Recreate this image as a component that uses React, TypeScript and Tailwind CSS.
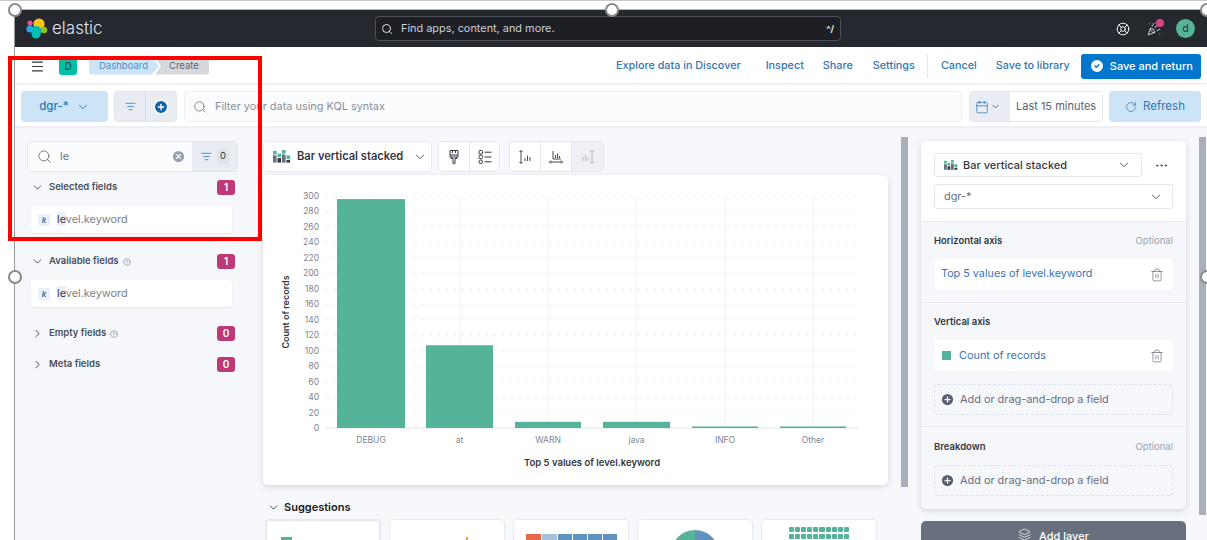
import React from "react";
import {
  Search, XCircle, ListFilter, ChevronDown, ChevronRight, Menu, RotateCw, Calendar, Trash2,
  MoreHorizontal, Layers, LifeBuoy, PartyPopper, CircleCheck, CirclePlus, CircleHelp,
} from "lucide-react";

const FONT = "font-['Inter','Liberation_Sans',sans-serif]";

function Handle({ cls }: { cls: string }) {
  return <div className={`absolute w-[14px] h-[14px] rounded-full bg-white border-[2.5px] border-[#8a8a8a] ${cls}`} />;
}

function BarIcon({ size = 18 }: { size?: number }) {
  const cols = [
    [8, 4, "#54b399", "#69707d"],
    [4, 7, "#54b399", "#343741"],
    [9, 3, "#54b399", "#69707d"],
    [3, 9, "#54b399", "#343741"],
  ] as const;
  return (
    <svg width={size} height={size * 0.7} viewBox="0 0 20 14" className="shrink-0">
      {cols.map((c, i) => (
        <g key={i}>
          <rect x={i * 5} y={0 + c[1] - 3} width={4} height={4} fill={c[2]} />
          <rect x={i * 5} y={c[1] + 2} width={4} height={12 - c[1]} fill={c[3]} />
        </g>
      ))}
    </svg>
  );
}

function Logo() {
  return (
    <svg width="22" height="21" viewBox="0 0 22 21" className="shrink-0">
      <circle cx="13" cy="6" r="5.6" fill="#fec514" />
      <circle cx="4" cy="5" r="2.6" fill="#f04e98" />
      <circle cx="4" cy="11" r="3.6" fill="#1ba9f5" />
      <circle cx="18" cy="12" r="3.2" fill="#93c90e" />
      <circle cx="10.5" cy="13" r="5" fill="#00bfb3" />
      <circle cx="10" cy="16" r="4.6" fill="#00bfb3" />
    </svg>
  );
}

function Badge({ n }: { n: number }) {
  return (
    <span className="w-[18px] h-[15px] rounded-[3px] bg-[#bd3a77] text-white text-[10px] font-semibold flex items-center justify-center">
      {n}
    </span>
  );
}

function FieldRow() {
  return (
    <div className="ml-[4px] w-[201px] h-[27px] bg-white rounded-[4px] shadow-[0_1px_2px_rgba(0,0,0,0.06)] flex items-center pl-[7px] gap-[7px]">
      <span className="w-[12px] h-[12px] rounded-[2px] bg-[#e6f1fa] text-[#3a6ea5] text-[8px] italic font-semibold flex items-center justify-center">k</span>
      <span className="text-[10.9px] text-[#7a818d]">
        <span className="bg-[#e6f1fa] text-[#343741]">le</span>vel.keyword
      </span>
    </div>
  );
}

function GroupHeader({ label, open, n, help, cls }: { label: string; open: boolean; n: number; help?: boolean; cls: string }) {
  return (
    <div className={`flex items-center w-[208px] ${cls}`}>
      <div className="w-[17px] ml-[4px] text-[#343741] flex">
        {open ? <ChevronDown size={13} strokeWidth={1.6} /> : <ChevronRight size={13} strokeWidth={1.6} />}
      </div>
      <span className="ml-[1px] text-[9.5px] font-semibold text-[#4a4f5a]">{label}</span>
      {help && <CircleHelp size={8} className="ml-[4px] text-[#8a909b]" />}
      <div className="ml-auto"><Badge n={n} /></div>
    </div>
  );
}

function Sidebar() {
  return (
    <div className="w-[235px] shrink-0 pt-[13px] pl-[12px] bg-[#f5f7fb]">
      <div className="w-[211px] h-[31px] flex rounded-[4px] border border-[#e3e7ef] bg-[#fbfcfd] overflow-hidden">
        <div className="flex-1 flex items-center pl-[9px]">
          <Search size={15} strokeWidth={1.4} className="text-[#69707d]" />
          <span className="ml-[8px] text-[10.9px] text-[#69707d]">le</span>
          <XCircle size={15} className="ml-auto mr-[6px] text-white fill-[#98a2b3]" />
        </div>
        <div className="w-[45px] bg-[#e9edf3] flex items-center pl-[9px] gap-[5px]">
          <ListFilter size={11} className="text-[#3b8ed0]" />
          <span className="text-[9.5px] text-[#343741] bg-[#dfe4ec] px-[3px] rounded-[2px]">0</span>
        </div>
      </div>
      <GroupHeader cls="mt-[8px]" label="Selected fields" open n={1} />
      <div className="mt-[11px]"><FieldRow /></div>
      <GroupHeader cls="mt-[21px]" label="Available fields" open n={1} help />
      <div className="mt-[11px]"><FieldRow /></div>
      <GroupHeader cls="mt-[19px]" label="Empty fields" open={false} n={0} help />
      <GroupHeader cls="mt-[16px]" label="Meta fields" open={false} n={0} />
    </div>
  );
}

function Chart() {
  const ticks = Array.from({ length: 16 }, (_, i) => i * 20);
  const y = (v: number) => 253 - (v / 300) * 232;
  const bars: [string, number, number, number][] = [
    ["DEBUG", 74, 68, 296],
    ["at", 163, 67, 107],
    ["WARN", 252, 66, 8],
    ["java", 340, 67, 8],
    ["INFO", 429, 66, 2],
    ["Other", 517, 66, 2],
  ];
  return (
    <svg width="625" height="310" viewBox="0 0 625 310">
      <g stroke="#eef0f4" strokeWidth="1">
        {ticks.map((t) => (
          <line key={t} x1="62" x2="595" y1={y(t)} y2={y(t)} strokeDasharray="4 4" />
        ))}
        {[108, 197, 285, 373, 462, 550].map((x) => (
          <line key={x} x1={x} x2={x} y1="21" y2="253" />
        ))}
      </g>
      <line x1="62" x2="595" y1="253" y2="253" stroke="#e3e6ec" />
      {ticks.map((t) => (
        <text key={t} x="56" y={y(t) + 3} textAnchor="end" fontSize="8.5" fill="#7d8491" fontFamily="Inter, sans-serif">{t}</text>
      ))}
      {bars.map(([label, x, w, v]) => (
        <g key={label}>
          <rect x={x} y={y(v)} width={w} height={253 - y(v)} fill="#54b399" />
          <text x={x + w / 2} y="268" textAnchor="middle" fontSize="8.5" fill="#7d8491" fontFamily="Inter, sans-serif">{label}</text>
        </g>
      ))}
      <text x="329" y="291" textAnchor="middle" fontSize="9.5" fontWeight="600" fill="#343741" fontFamily="Inter, sans-serif">Top 5 values of level.keyword</text>
      <text transform="translate(26 137) rotate(-90)" textAnchor="middle" fontSize="9" fontWeight="600" fill="#343741" fontFamily="Inter, sans-serif">Count of records</text>
    </svg>
  );
}

function AxisIcon({ v }: { v: 0 | 1 | 2 }) {
  const dim = v === 2 ? "#a9afb9" : "#343741";
  if (v === 1) {
    return (
      <svg width="16" height="16" viewBox="0 0 16 16" fill="none" stroke={dim} strokeWidth="0.9">
        <path d="M5 2v8h8M7.5 9V6M9.5 9V4.5M11.5 9V7" />
        <path d="M1.5 13h13M3 11.5 1.5 13 3 14.5M13 11.5l1.5 1.5-1.5 1.5" />
      </svg>
    );
  }
  return (
    <svg width="16" height="16" viewBox="0 0 16 16" fill="none" stroke={dim} strokeWidth="0.9" className={v === 2 ? "-scale-x-100" : ""}>
      <path d="M4 1.5v13M2.5 3 4 1.5 5.5 3M2.5 13 4 14.5 5.5 13" />
      <path d="M8 12V9M10.5 12V6.5M13 12V8" />
    </svg>
  );
}

function BrushIcon() {
  return (
    <svg width="14" height="16" viewBox="0 0 14 16" fill="none" stroke="#343741" strokeWidth="1">
      <path d="M3 1.5h8v6.5H3zM3 6h8M5.5 1.5V4M8.5 1.5V4" />
      <path d="M4 8v1.5h2V14a1 1 0 0 0 2 0V9.5h2V8" />
    </svg>
  );
}

function LegendIcon() {
  return (
    <svg width="14" height="16" viewBox="0 0 14 16" fill="none" stroke="#343741" strokeWidth="1">
      <rect x="1" y="1.5" width="3.5" height="3.5" rx="1" />
      <rect x="1" y="6.2" width="3.5" height="3.5" rx="1" />
      <circle cx="2.75" cy="12.8" r="1.8" />
      <path d="M6.5 3.2h7M6.5 8h7M6.5 12.8h7" />
    </svg>
  );
}

function ToolBtn({ children, disabled, border, w }: { children: React.ReactNode; disabled?: boolean; border?: boolean; w: string }) {
  return (
    <div className={`${w} flex items-center justify-center ${disabled ? "bg-[#eef0f5]" : "bg-white"} ${border ? "border-r border-[#e3e7ef]" : ""}`}>
      {children}
    </div>
  );
}

function Thumb({ cls, children }: { cls: string; children?: React.ReactNode }) {
  return <div className={`shrink-0 h-[30px] bg-white rounded-t-[4px] border border-[#e6e9f0] overflow-hidden flex justify-center ${cls}`}>{children}</div>;
}

function Workspace() {
  return (
    <div className="w-[658px] shrink-0 flex bg-[#f7f8fc]">
      <div className="w-[638px] pl-[13px] pt-[13px] shrink-0">
        <div className="flex h-[31px]">
          <div className="w-[169px] bg-white rounded-[5px] border border-[#e8ebf1] flex items-center pl-[9px]">
            <BarIcon />
            <span className="ml-[6px] text-[11.1px] font-semibold text-[#343741] whitespace-nowrap">Bar vertical stacked</span>
            <ChevronDown size={14} strokeWidth={1.5} className="ml-[10px] text-[#343741]" />
          </div>
          <div className="ml-[6px] flex rounded-[5px] border border-[#e3e7ef] overflow-hidden">
            <ToolBtn w="w-[31px]" border><BrushIcon /></ToolBtn>
            <ToolBtn w="w-[29px]"><LegendIcon /></ToolBtn>
          </div>
          <div className="ml-[9px] flex rounded-[5px] border border-[#e3e7ef] overflow-hidden">
            <ToolBtn w="w-[31px]" border><AxisIcon v={0} /></ToolBtn>
            <ToolBtn w="w-[31px]" border><AxisIcon v={1} /></ToolBtn>
            <ToolBtn w="w-[31px]" disabled><AxisIcon v={2} /></ToolBtn>
          </div>
        </div>
        <div className="mt-[3px] w-[625px] h-[310px] bg-white rounded-[5px] shadow-[0_2px_6px_rgba(60,70,90,0.18)]">
          <Chart />
        </div>
        <div className="mt-[15px] flex items-center h-[14px] pl-[4px]">
          <ChevronDown size={13} strokeWidth={1.6} className="text-[#343741]" />
          <span className="ml-[4px] text-[11px] font-semibold text-[#1a1c21]">Suggestions</span>
        </div>
        <div className="mt-[5px] flex ml-[2px] w-[640px] gap-[8px]">
          <Thumb cls="w-[116px] bg-[#f1f3f7] border-[#c9cfdb] border-2 justify-start pl-[14px] pt-[16px]">
            <div className="w-[11px] h-[10px] bg-[#54b399]" />
          </Thumb>
          <Thumb cls="w-[116px]">
            <div className="mt-[17px] ml-[40px] w-[2px] h-[12px] bg-[#e7a33e]" />
          </Thumb>
          <Thumb cls="w-[116px] items-start pt-[14px]">
            <div className="flex gap-[1px] h-[14px]">
              <div className="w-[15px] bg-[#e7664c]" />
              <div className="w-[15px] bg-[#a8c0de]" />
              <div className="w-[14px] bg-[#6092c0]" />
              <div className="w-[14px] bg-[#6092c0]" />
              <div className="w-[14px] bg-[#6092c0]" />
              <div className="w-[14px] bg-[#6092c0]" />
            </div>
          </Thumb>
          <Thumb cls="w-[116px] items-start pt-[10px]">
            <div className="w-[48px] h-[48px] rounded-full bg-[conic-gradient(#6092c0_0_50%,#54b399_50%_100%)]" />
          </Thumb>
          <Thumb cls="w-[116px] pt-[7px]">
            <div className="grid grid-cols-10 gap-[1px] w-[60px]">
              {Array.from({ length: 30 }, (_, i) => (
                <div key={i} className="h-[5px] bg-[#54b399] rounded-[1px]" />
              ))}
            </div>
          </Thumb>
        </div>
      </div>
      <div className="ml-[13px] mt-[9px] w-[7px] h-[350px] bg-[#a9afb9] shrink-0" />
    </div>
  );
}

function DropZone() {
  return (
    <div className="h-[31px] rounded-[4px] border border-dashed border-[#dde1e9] flex items-center pl-[5px] gap-[5px]">
      <CirclePlus size={15} className="text-white fill-[#5a6170]" />
      <span className="text-[10.9px] text-[#69707d]">Add or drag-and-drop a field</span>
    </div>
  );
}

function SectionHead({ label, optional }: { label: string; optional?: boolean }) {
  return (
    <div className="flex items-center justify-between h-[12px]">
      <span className="text-[9.5px] font-semibold text-[#343741]">{label}</span>
      {optional && <span className="text-[9.5px] text-[#98a2b3]">Optional</span>}
    </div>
  );
}

function RightPanel() {
  return (
    <div className="flex-1 flex bg-[#f7f8fc]">
      <div className="ml-[13px] w-[265px] shrink-0 pt-[13px]">
        <div className="h-[368px] bg-[#f5f7fb] rounded-[5px] shadow-[0_2px_6px_rgba(60,70,90,0.2)] overflow-hidden">
          <div className="h-[81px] bg-white border-b border-[#e9ecf2] px-[13px] pt-[12px]">
            <div className="flex items-center">
              <div className="w-[208px] h-[24px] rounded-[3px] border border-[#e3e7ef] flex items-center pl-[9px] pr-[10px]">
                <BarIcon size={14} />
                <span className="ml-[5px] text-[11px] text-[#343741] font-medium whitespace-nowrap">Bar vertical stacked</span>
                <ChevronDown size={14} strokeWidth={1.5} className="ml-auto text-[#343741]" />
              </div>
              <MoreHorizontal size={15} strokeWidth={1.6} className="ml-[12px] text-[#343741]" />
            </div>
            <div className="mt-[7px] w-[239px] h-[25px] rounded-[3px] border border-[#e3e7ef] flex items-center pl-[9px] pr-[9px]">
              <span className="text-[10.9px] text-[#69707d]">dgr-*</span>
              <ChevronDown size={14} strokeWidth={1.5} className="ml-auto text-[#343741]" />
            </div>
          </div>
          <div className="h-[81px] border-b border-[#e9ecf2] px-[13px] pt-[13px]">
            <SectionHead label="Horizontal axis" optional />
            <div className="mt-[12px] h-[31px] bg-white rounded-[4px] flex items-center pl-[7px] pr-[9px]">
              <span className="text-[10.8px] text-[#3a74b8]">Top 5 values of level.keyword</span>
              <Trash2 size={14} strokeWidth={1.1} className="ml-auto text-[#5a6170]" />
            </div>
          </div>
          <div className="h-[124px] border-b border-[#e9ecf2] px-[13px] pt-[13px]">
            <SectionHead label="Vertical axis" />
            <div className="mt-[12px] h-[31px] bg-white rounded-[4px] flex items-center pl-[8px] pr-[9px]">
              <span className="w-[9px] h-[9px] bg-[#54b399]" />
              <span className="ml-[8px] text-[10.9px] text-[#3a74b8]">Count of records</span>
              <Trash2 size={14} strokeWidth={1.1} className="ml-auto text-[#5a6170]" />
            </div>
            <div className="mt-[13px]"><DropZone /></div>
          </div>
          <div className="px-[13px] pt-[14px]">
            <SectionHead label="Breakdown" optional />
            <div className="mt-[12px]"><DropZone /></div>
          </div>
        </div>
        <div className="mt-[12px] h-[40px] bg-[#69707d] rounded-t-[5px] flex items-start justify-center pt-[7px] gap-[8px]">
          <Layers size={13} strokeWidth={1.3} className="text-white" />
          <span className="text-[11px] font-medium text-white">Add layer</span>
        </div>
      </div>
      <div className="ml-[13px] mt-[9px] w-[7px] h-[378px] bg-[#a9afb9] shrink-0" />
    </div>
  );
}

function TopLink({ children, cls }: { children: React.ReactNode; cls: string }) {
  return <span className={`text-[10.8px] font-medium text-[#2f78b5] whitespace-nowrap shrink-0 ${cls}`}>{children}</span>;
}

export default function App() {
  return (
    <div className={`relative w-[1207px] h-[540px] overflow-hidden bg-white ${FONT}`}>
      <div className="h-[1px] bg-[#c8c8c8]" />
      <div className="mt-[8px] h-[1px] ml-[15px] bg-[#b5b5b5]" />
      <div className="ml-[15px]">
        <header className="h-[37px] bg-[#25282f] flex items-center pl-[11px]">
          <Logo />
          <span className="ml-[4px] w-[51px] text-[17px] font-light text-[#dfe5ef]">elastic</span>
          <div className="ml-[272px] w-[466px] h-[25px] shrink-0 rounded-[4px] border border-[#4b4f57] bg-[#1d1f25] flex items-center pl-[5px] pr-[6px]">
            <Search size={12} className="text-[#dfe5ef]" />
            <span className="ml-[8px] text-[10.9px] text-[#c9ced6]">Find apps, content, and more.</span>
            <span className="ml-auto text-[9px] font-bold text-[#dfe5ef]">^/</span>
          </div>
          <LifeBuoy size={14} strokeWidth={1.6} className="ml-[275px] shrink-0 text-white" />
          <div className="relative ml-[17px] w-[14px] h-[14px] shrink-0">
            <PartyPopper size={14} strokeWidth={1.3} className="text-white" />
            <span className="absolute -top-[3px] -right-[3px] w-[8px] h-[8px] rounded-full bg-[#d6457f]" />
          </div>
          <div className="ml-[15px] w-[19px] h-[19px] shrink-0 rounded-full bg-[#54b399] text-[#25282f] text-[10px] flex items-center justify-center">d</div>
        </header>
        <div className="h-[36px] bg-white shadow-[0_1px_2px_rgba(0,0,0,0.12)] relative flex items-center pl-[15px] pt-[2px]">
          <Menu size={15} strokeWidth={1.7} className="shrink-0 text-[#343741]" />
          <div className="ml-[14px] w-[18px] h-[18px] shrink-0 rounded-[3px] bg-[#00bfa5] text-[#1a4d47] text-[10px] font-medium flex items-center justify-center">D</div>
          <div className="ml-[12px] h-[17px] pl-[10px] w-[70px] shrink-0 rounded-l-[3px] bg-[#cde4f6] text-[#4a90c8] text-[9.5px] flex items-center [clip-path:polygon(0_0,90%_0,100%_50%,90%_100%,0_100%)]">Dashboard</div>
          <div className="-ml-[4px] h-[17px] w-[54px] shrink-0 pl-[14px] rounded-r-[3px] bg-[#d6d8dc] text-[#5f6570] text-[9.5px] flex items-center [clip-path:polygon(0_0,100%_0,100%_100%,0_100%,11%_50%)]">Create</div>
          <TopLink cls="ml-[407px]">Explore data in Discover</TopLink>
          <TopLink cls="ml-[25px]">Inspect</TopLink>
          <TopLink cls="ml-[19px]">Share</TopLink>
          <TopLink cls="ml-[20px]">Settings</TopLink>
          <div className="ml-[12px] w-[1px] h-[24px] shrink-0 bg-[#e3e7ef]" />
          <TopLink cls="ml-[13px]">Cancel</TopLink>
          <TopLink cls="ml-[19px]">Save to library</TopLink>
          <div className="ml-[11px] w-[120px] h-[25px] shrink-0 rounded-[3px] bg-[#0077cc] flex items-center pl-[8px] gap-[5px]">
            <CircleCheck size={16} className="text-[#0077cc] fill-white" />
            <span className="text-[11px] font-medium text-white whitespace-nowrap">Save and return</span>
          </div>
        </div>
        <div className="h-[45px] bg-white border-b-2 border-[#eceff4] flex items-start pt-[8px] pl-[6px]">
          <div className="w-[87px] h-[31px] rounded-[4px] bg-[#cce4f5] flex items-center justify-center gap-[7px] text-[#2f78b5]">
            <span className="text-[11.5px] font-medium">dgr-*</span>
            <ChevronDown size={14} strokeWidth={1.6} />
          </div>
          <div className="ml-[6px] w-[63px] h-[31px] rounded-[4px] bg-[#e9edf3] border border-[#e0e4eb] flex">
            <div className="w-[31px] flex items-center justify-center border-r border-[#d9dee6]">
              <ListFilter size={11} className="text-[#3b8ed0]" />
            </div>
            <div className="flex-1 flex items-center justify-center">
              <CirclePlus size={16} className="text-white fill-[#0f62a8]" />
            </div>
          </div>
          <div className="ml-[7px] w-[778px] h-[31px] rounded-[4px] border border-[#eceff4] bg-[#fbfcfd] flex items-center pl-[8px]">
            <Search size={14} strokeWidth={1.4} className="text-[#69707d]" />
            <span className="ml-[8px] text-[10.9px] text-[#8a909b]">Filter your data using KQL syntax</span>
          </div>
          <div className="ml-[7px] w-[134px] h-[31px] rounded-[4px] border border-[#e3e7ef] flex overflow-hidden">
            <div className="w-[40px] bg-[#e9edf3] flex items-center pl-[5px] gap-[1px]">
              <Calendar size={14} strokeWidth={1.3} className="text-[#2f78b5]" />
              <ChevronDown size={11} className="text-[#5a6170]" />
            </div>
            <span className="flex-1 flex items-center pl-[6px] text-[11px] text-[#5a6170] bg-white whitespace-nowrap">Last 15 minutes</span>
          </div>
          <div className="ml-[6px] w-[92px] h-[31px] rounded-[4px] bg-[#cce4f5] flex items-center justify-center gap-[6px] text-[#2f78b5]">
            <RotateCw size={12} strokeWidth={1.4} />
            <span className="text-[11.5px]">Refresh</span>
          </div>
        </div>
        <div className="h-[412px] flex overflow-hidden">
          <Sidebar />
          <Workspace />
          <RightPanel />
        </div>
      </div>
      <div className="absolute left-[14px] top-[9px] bottom-0 w-[1px] bg-[#9a9a9a]" />
      <div className="absolute left-[8px] top-[56px] w-[254px] h-[185px] border-[4px] border-[#fe0000]" />
      <Handle cls="left-[8px] top-[3px]" />
      <Handle cls="left-[605px] top-[3px]" />
      <Handle cls="left-[1200px] top-[3px]" />
      <Handle cls="left-[8px] top-[270px]" />
      <Handle cls="left-[1200px] top-[270px]" />
    </div>
  );
}
